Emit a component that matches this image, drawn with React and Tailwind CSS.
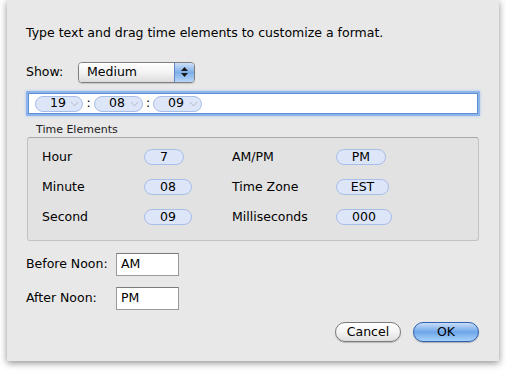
import React from "react";

const font = { fontFamily: '"DejaVu Sans", "Liberation Sans", sans-serif' };

function Chevron() {
  return (
    <svg width="9" height="6" viewBox="0 0 9 6" className="ml-auto">
      <polyline points="1,1 4.5,5 8,1" fill="none" stroke="#b8bcc6" strokeWidth="1" />
    </svg>
  );
}

function Token({ value, w }) {
  return (
    <div
      className="flex items-center h-[16px] rounded-full border border-[#a9bde9] bg-[#dde6f9] pl-[14px] pr-[3px]"
      style={{ width: w }}
    >
      <span className="text-[12.5px] leading-none text-black">{value}</span>
      <Chevron />
    </div>
  );
}

function Pill({ value, w }) {
  return (
    <div
      className="flex items-center justify-center h-[16px] rounded-full border border-[#a9bde9] bg-[#dde6f9] text-[12.5px] leading-none text-black"
      style={{ width: w }}
    >
      {value}
    </div>
  );
}

export default function App() {
  return (
    <div className="w-[506px] h-[372px] bg-white overflow-hidden text-black" style={font}>
      <div className="ml-[7px] w-[492px] h-[361px] bg-[#e8e8e8] shadow-[0_2px_7px_rgba(0,0,0,0.45)] flex flex-col pl-[19px]">
        <p className="mt-[25px] h-4 leading-4 text-[12.5px]">
          Type text and drag time elements to customize a format.
        </p>

        <div className="mt-[21px] flex items-center h-5">
          <span className="w-[52px] text-[12.5px]">Show:</span>
          <div className="flex h-[21px] w-[117px] rounded-[4px] border border-[#7f7f7f] overflow-hidden shadow-[0_1px_1px_rgba(0,0,0,0.15)]">
            <div className="flex-1 flex items-center pl-2 text-[12.5px] bg-gradient-to-b from-white via-[#f3f3f3] to-[#dcdcdc]">
              Medium
            </div>
            <div className="w-[20px] flex flex-col items-center justify-center gap-[2px] border-l border-[#5f86c3] bg-gradient-to-b from-[#cfe0f7] via-[#7eaee8] to-[#b7d6f7]">
              <svg width="7" height="4" viewBox="0 0 7 4"><polygon points="3.5,0 7,4 0,4" fill="#1a1a1a" /></svg>
              <svg width="7" height="4" viewBox="0 0 7 4"><polygon points="0,0 7,0 3.5,4" fill="#1a1a1a" /></svg>
            </div>
          </div>
        </div>

        <div className="mt-[11px] ml-[2px] w-[450px] h-[21px] bg-white border border-[#5d8fd5] shadow-[0_0_0_2px_#8db4ea,0_0_3px_2px_#a9c8f0] flex items-center pl-[6px]">
          <Token value="19" w={48} />
          <span className="text-[12.5px] leading-none w-[11px] text-center">:</span>
          <Token value="08" w={49} />
          <span className="text-[12.5px] leading-none w-[10px] text-center">:</span>
          <Token value="09" w={49} />
        </div>

        <div className="mt-[10px] pl-[10px] h-[12px] leading-[12px] text-[11px] text-[#222]">Time Elements</div>

        <div className="mt-[1px] ml-[1px] w-[452px] h-[104px] rounded-[3px] border border-[#c2c2c2] border-t-[#a9a9a9] bg-[#e2e2e2] pt-[4px] pl-[14px]">
          <div className="grid grid-cols-[102px_88px_104px_auto] auto-rows-[30px] items-center text-[12.5px]">
            <span>Hour</span>
            <Pill value="7" w={40} />
            <span>AM/PM</span>
            <Pill value="PM" w={50} />
            <span>Minute</span>
            <Pill value="08" w={48} />
            <span>Time Zone</span>
            <Pill value="EST" w={53} />
            <span>Second</span>
            <Pill value="09" w={48} />
            <span>Milliseconds</span>
            <Pill value="000" w={56} />
          </div>
        </div>

        <div className="mt-[12px] flex items-center h-[23px] text-[12.5px]">
          <span className="w-[90px]">Before Noon:</span>
          <div className="w-[63px] h-[23px] bg-white border border-[#9a9a9a] border-t-[#7a7a7a] flex items-center pl-[4px]">AM</div>
        </div>
        <div className="mt-[11px] flex items-center h-[23px] text-[12.5px]">
          <span className="w-[90px]">After Noon:</span>
          <div className="w-[63px] h-[23px] bg-white border border-[#9a9a9a] border-t-[#7a7a7a] flex items-center pl-[4px]">PM</div>
        </div>

        <div className="mt-[12px] flex justify-end gap-[12px] pr-[20px]">
          <button className="w-[66px] h-[20px] rounded-full border border-[#7a7a7a] bg-gradient-to-b from-white via-[#f4f4f4] to-[#dedede] text-[12.5px] leading-none shadow-[0_1px_1px_rgba(0,0,0,0.2)]">
            Cancel
          </button>
          <button className="w-[66px] h-[20px] rounded-full border border-[#2d5fb0] bg-gradient-to-b from-[#c9ddf7] via-[#6ea6ea] to-[#a8d2fb] text-[12.5px] leading-none shadow-[0_1px_1px_rgba(0,0,0,0.25)]">
            OK
          </button>
        </div>
      </div>
    </div>
  );
}
